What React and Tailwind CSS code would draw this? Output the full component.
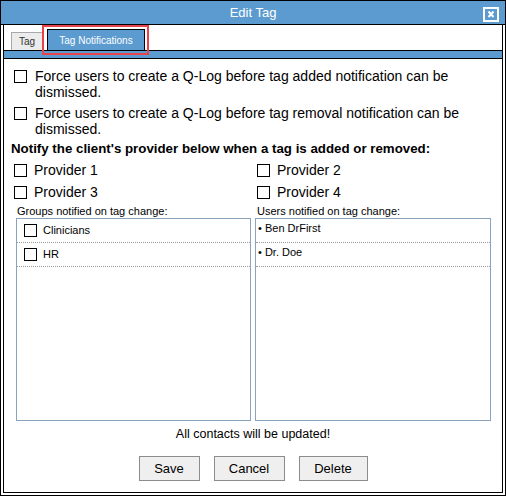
import React from 'react';

const Box = () => <span className="inline-block w-[13px] h-[13px] border border-black bg-white shrink-0" />;

const App = () => {
  const groups = ['Clinicians', 'HR'];
  const users = ['Ben DrFirst', 'Dr. Doe'];

  return (
    <div className="w-[506px] h-[496px] bg-white text-black font-['Liberation_Sans',Arial,sans-serif]">
      <div className="h-full border border-black flex flex-col">
        {/* Title bar */}
        <div className="h-[24px] bg-[#5b9bcf] border-b border-black relative flex items-center justify-center text-white text-[13px]">
          Edit Tag
          <svg className="absolute right-[6px] top-[6px]" width="16" height="15" viewBox="0 0 16 15">
            <rect x="1" y="1" width="14" height="13" fill="none" stroke="#fff" strokeWidth="2" />
            <path d="M5.5 4.5 L10.5 10 M10.5 4.5 L5.5 10" stroke="#fff" strokeWidth="2" />
          </svg>
        </div>

        <div className="flex-1 px-[2px] pb-[2px] flex flex-col">
          <div className="flex-1 border-x border-b border-black flex flex-col">
            {/* Tabs */}
            <div className="h-[25px] pl-[7px] flex items-end">
              <div className="w-[32px] h-[18px] bg-[#ececec] border-x border-t border-[#a8a8a8] text-[10px] text-[#333] flex items-center justify-center">
                Tag
              </div>
              <div className="relative ml-[4px]">
                <div className="w-[98px] h-[21px] bg-[#5b9bcf] border-x border-t border-black text-white text-[10px] flex items-center justify-center">
                  Tag Notifications
                </div>
                <div className="absolute left-[-5px] top-[-4px] right-[-4px] bottom-[-5px] border-2 border-[#e8434b]" />
              </div>
            </div>
            <div className="h-[9px] bg-[#5b9bcf] border-y border-black" />

            {/* Content */}
            <div className="flex-1 flex flex-col pt-[9px] text-[14px] leading-[16px]">
              <div className="flex items-start pl-[10px] pr-[40px]">
                <span className="mt-[2px]"><Box /></span>
                <span className="ml-[8px]">Force users to create a Q-Log before tag added notification can be dismissed.</span>
              </div>
              <div className="flex items-start pl-[10px] pr-[40px] mt-[5px]">
                <span className="mt-[2px]"><Box /></span>
                <span className="ml-[8px]">Force users to create a Q-Log before tag removal notification can be dismissed.</span>
              </div>
              <div className="pl-[7px] mt-[4px] font-bold text-[13.3px]">
                Notify the client's provider below when a tag is added or removed:
              </div>
              <div className="grid grid-cols-[243px_243px] pl-[10px] mt-[2px]">
                {['Provider 1', 'Provider 2', 'Provider 3', 'Provider 4'].map((p) => (
                  <div key={p} className="h-[22px] flex items-center">
                    <Box />
                    <span className="ml-[7px]">{p}</span>
                  </div>
                ))}
              </div>

              <div className="grid grid-cols-[235px_236px] gap-x-[4px] pl-[12px] mt-[2px] text-[11px] leading-[13px]">
                <div>
                  <div className="pl-[1px] h-[13px]">Groups notified on tag change:</div>
                  <div className="h-[203px] border border-[#8aa4bd]">
                    {groups.map((g) => (
                      <div key={g} className="h-[24px] border-b border-dotted border-[#9a9a9a] flex items-center pl-[7px]">
                        <Box />
                        <span className="ml-[6px]">{g}</span>
                      </div>
                    ))}
                  </div>
                </div>
                <div>
                  <div className="pl-[2px] h-[13px]">Users notified on tag change:</div>
                  <div className="h-[203px] border border-[#8aa4bd]">
                    {users.map((u) => (
                      <div key={u} className="h-[24px] border-b border-dotted border-[#9a9a9a] pl-[2px] pt-[3px]">
                        • {u}
                      </div>
                    ))}
                  </div>
                </div>
              </div>

              <div className="mt-[5px] text-center text-[12.5px] leading-[16px]">All contacts will be updated!</div>

              <div className="mt-[14px] flex justify-center gap-[14px] text-[13px]">
                <button className="w-[61px] h-[25px] bg-[#efefef] border border-[#8c8c8c]">Save</button>
                <button className="w-[71px] h-[25px] bg-[#efefef] border border-[#8c8c8c]">Cancel</button>
                <button className="w-[69px] h-[25px] bg-[#efefef] border border-[#8c8c8c]">Delete</button>
              </div>
            </div>
          </div>
        </div>
      </div>
    </div>
  );
};

export default App;
